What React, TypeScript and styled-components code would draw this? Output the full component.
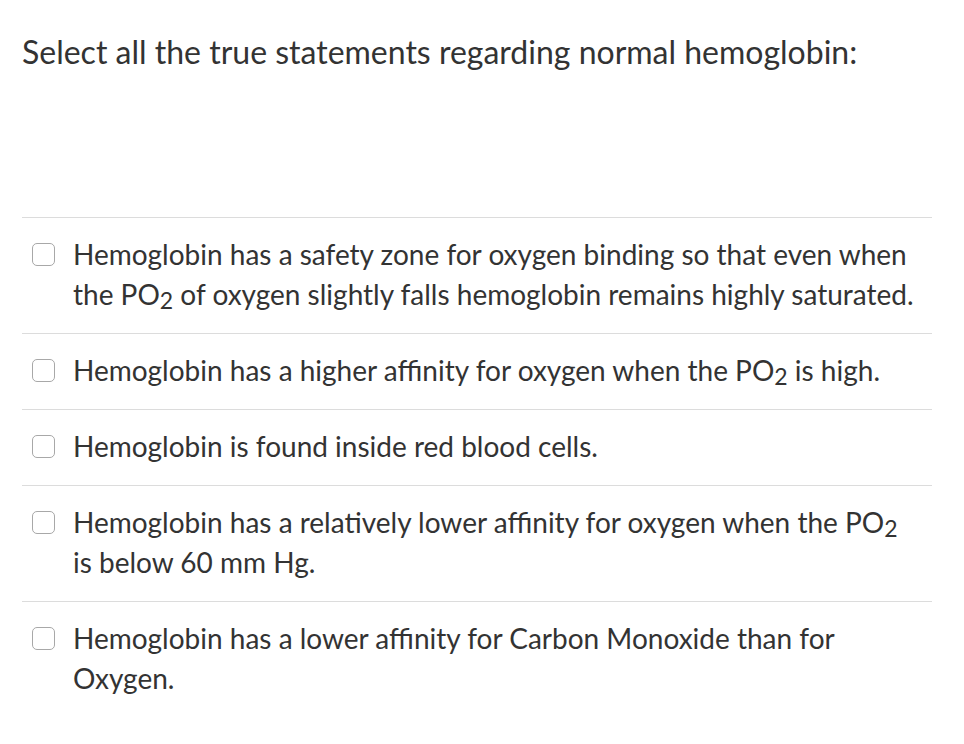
import React from 'react';
import styled, { createGlobalStyle } from 'styled-components';

const GlobalStyle = createGlobalStyle`
    body {
        margin: 0;
        background: #ffffff;
        font-family: Lato, 'Open Sans', sans-serif;
        color: #333333;
    }
`;

const Page = styled.div`
    padding: 0 32px 0 22px;
`;

const Question = styled.div`
    height: 217px;
    box-sizing: border-box;
    padding-top: 30px;
    font-size: 32px;
    line-height: 44px;
    color: #333333;
`;

const Answers = styled.div`
    display: flex;
    flex-direction: column;
`;

const Answer = styled.label`
    display: flex;
    align-items: flex-start;
    gap: 18px;
    padding: 16px 18px 19px 10px;
    border-top: 1px solid #dcdcdc;
    font-size: 28px;
    line-height: 40px;
    color: #333333;
    cursor: pointer;
`;

const Box = styled.span`
    flex: none;
    width: 21px;
    height: 21px;
    margin-top: 9px;
    border: 1px solid #a8a8a8;
    border-radius: 5px;
    background: #ffffff;
`;

const Sub = styled.sub`
    font-size: 23px;
    line-height: 0;
    vertical-align: -4px;
`;

const answers: React.ReactNode[] = [
    <>
        Hemoglobin has a safety zone for oxygen binding so that even when the PO<Sub>2</Sub> of oxygen
        slightly falls hemoglobin remains highly saturated.
    </>,
    <>
        Hemoglobin has a higher affinity for oxygen when the PO<Sub>2</Sub> is high.
    </>,
    <>Hemoglobin is found inside red blood cells.</>,
    <>
        Hemoglobin has a relatively lower affinity for oxygen when the PO<Sub>2</Sub> is below 60 mm Hg.
    </>,
    <>Hemoglobin has a lower affinity for Carbon Monoxide than for Oxygen.</>,
];

export default function App() {
    return (
        <>
            <GlobalStyle />
            <Page>
                <Question>Select all the true statements regarding normal hemoglobin:</Question>
                <Answers>
                    {answers.map((a, i) => (
                        <Answer key={i}>
                            <Box />
                            <span>{a}</span>
                        </Answer>
                    ))}
                </Answers>
            </Page>
        </>
    );
}
